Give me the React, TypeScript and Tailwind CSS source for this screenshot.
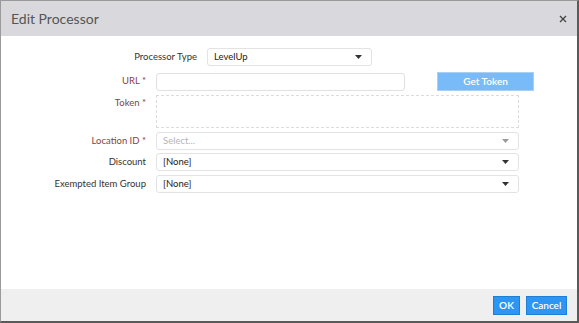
const Caret = ({ muted }: { muted?: boolean }) => (
    <svg width="7" height="4" viewBox="0 0 7 4" className={muted ? 'text-[#9a9a9a]' : 'text-[#333]'}>
        <path d="M0 0 L7 0 L3.5 4 Z" fill="currentColor" />
    </svg>
);

const Field = ({ label, required, children, top }: { label: string; required?: boolean; children: React.ReactNode; top?: boolean }) => (
    <div className={`flex ${top ? 'items-start' : 'items-center'}`}>
        <div
            className={`w-[146px] shrink-0 pr-[1px] text-right ${required ? 'text-[#8e3b46]' : 'text-[#333]'} ${top ? 'pt-[1px]' : ''}`}
        >
            {label}
            {required && ' *'}
        </div>
        <div className="ml-[9px]">{children}</div>
    </div>
);

const Select = ({ value, placeholder, width }: { value?: string; placeholder?: string; width: string }) => (
    <div
        className={`${width} h-[18px] flex items-center justify-between bg-white border border-[#e3e3e3] rounded-[3px] pl-[6px] pr-[9px]`}
    >
        {value ? <span className="text-[#222]">{value}</span> : <span className="text-[#b5b5b5]">{placeholder}</span>}
        <Caret muted={!value} />
    </div>
);

export default function App() {
    return (
        <div
            className="w-[579px] h-[323px] flex flex-col bg-white border-l border-t border-[#9a9a9a] border-r-2 border-b-2 border-r-[#5a5a5a] border-b-[#5a5a5a] text-[9.5px]"
            style={{ fontFamily: 'Lato, "Open Sans", sans-serif' }}
        >
            {/* Header */}
            <div className="h-[35px] shrink-0 bg-[#d9d9dd] flex items-center justify-between pl-[10px] pr-[10px]">
                <span className="text-[14px] text-[#555]">Edit Processor</span>
                <svg width="8" height="8" viewBox="0 0 8 8">
                    <path d="M1 1 L7 7 M7 1 L1 7" stroke="#444" strokeWidth="1.3" />
                </svg>
            </div>

            {/* Body */}
            <div className="flex-1 pt-[12px]">
                <div className="flex items-center">
                    <div className="w-[196px] shrink-0 text-right text-[#333]">Processor Type</div>
                    <div className="ml-[10px]">
                        <Select value="LevelUp" width="w-[165px]" />
                    </div>
                </div>

                <div className="mt-[6px] flex items-center">
                    <Field label="URL" required>
                        <div className="w-[249px] h-[18px] border border-[#e0e0e0] rounded-[3px] bg-white" />
                    </Field>
                    <button className="ml-[32px] w-[97px] h-[19px] bg-[#79bbf8] border border-[#a9cff2] text-white text-[10px] font-semibold">
                        Get Token
                    </button>
                </div>

                <div className="mt-[4px]">
                    <Field label="Token" required top>
                        <div className="w-[363px] h-[33px] border border-dashed border-[#dcdcdc]" />
                    </Field>
                </div>

                <div className="mt-[4px]">
                    <Field label="Location ID" required>
                        <Select placeholder="Select..." width="w-[363px]" />
                    </Field>
                </div>

                <div className="mt-[3px]">
                    <Field label="Discount">
                        <Select value="[None]" width="w-[363px]" />
                    </Field>
                </div>

                <div className="mt-[4px]">
                    <Field label="Exempted Item Group">
                        <Select value="[None]" width="w-[363px]" />
                    </Field>
                </div>
            </div>

            {/* Footer */}
            <div className="h-[32px] shrink-0 bg-[#efefef] flex items-center justify-end gap-[6px] pr-[10px]">
                <button className="h-[19px] w-[27px] bg-[#2e95f2] border border-[#1d7fd6] text-white text-[10px] font-semibold">
                    OK
                </button>
                <button className="h-[19px] w-[41px] bg-[#2e95f2] border border-[#1d7fd6] text-white text-[10px] font-semibold">
                    Cancel
                </button>
            </div>
        </div>
    );
}
